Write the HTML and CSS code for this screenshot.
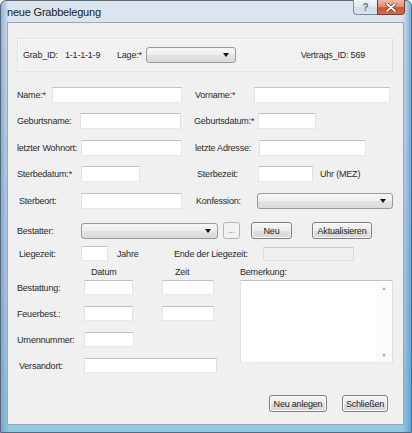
FILE: index.html
```html
<!DOCTYPE html>
<html lang="de">
<head>
<meta charset="utf-8">
<title>neue Grabbelegung</title>
<link rel="stylesheet" href="styles.css">
</head>
<body>
<div class="window">
  <div class="titlebar">
    <span class="title">neue Grabbelegung</span>
    <div class="caption-btns">
      <div class="cbtn help">?</div>
      <div class="cbtn close">
        <svg width="12" height="9" viewBox="0 0 12 9"><path d="M2 1 L10 8 M10 1 L2 8" stroke="#7a2a1a" stroke-width="3.2" stroke-linecap="round"/><path d="M2 1 L10 8 M10 1 L2 8" stroke="#fff" stroke-width="1.8" stroke-linecap="round"/></svg>
      </div>
    </div>
  </div>
  <div class="client">
    <div class="group">
      <span class="w42">Grab_ID:</span>
      <span class="w52">1-1-1-1-9</span>
      <span class="w29">Lage:*</span>
      <div class="combo w90"><span class="arrow"></span></div>
      <span class="vid">Vertrags_ID: 569</span>
    </div>

    <div class="row r1">
      <span class="lbl w35">Name:*</span>
      <div class="tb w130"></div>
      <span class="lbl w59 ml13">Vorname:*</span>
      <div class="tb w136"></div>
    </div>

    <div class="row r2">
      <span class="lbl w63">Geburtsname:</span>
      <div class="tb w101"></div>
      <span class="lbl w64 ml13">Geburtsdatum:*</span>
      <div class="tb w58"></div>
    </div>

    <div class="row r3">
      <span class="lbl w64">letzter Wohnort:</span>
      <div class="tb w101"></div>
      <span class="lbl w64 ml13">letzte Adresse:</span>
      <div class="tb w107"></div>
    </div>

    <div class="row r4">
      <span class="lbl w64">Sterbedatum:*</span>
      <div class="tb w59"></div>
      <span class="lbl w61 ml57">Sterbezeit:</span>
      <div class="tb w55"></div>
      <span class="lbl ml7">Uhr (MEZ)</span>
    </div>

    <div class="row r5">
      <span class="lbl w64 pl2">Sterbeort:</span>
      <div class="tb w101"></div>
      <span class="lbl w61 ml14">Konfession:</span>
      <div class="combo w136"><span class="arrow"></span></div>
    </div>

    <div class="row r6">
      <span class="lbl w64">Bestatter:</span>
      <div class="combo w137"><span class="arrow"></span></div>
      <div class="btn disabled w17 ml5">...</div>
      <div class="btn w41 ml11">Neu</div>
      <div class="btn w60 ml20">Aktualisieren</div>
    </div>

    <div class="row r7">
      <span class="lbl w64 pl2">Liegezeit:</span>
      <div class="tb w27 h15"></div>
      <span class="lbl w57 ml9">Jahre</span>
      <span class="lbl w89">Ende der Liegezeit:</span>
      <div class="tb disabledtb w91 h14"></div>
    </div>

    <div class="row hdr">
      <span class="w74"></span>
      <span class="w84">Datum</span>
      <span class="w65">Zeit</span>
      <span>Bemerkung:</span>
    </div>

    <div class="lower">
      <div class="leftcol">
        <div class="row lr">
          <span class="lbl w67">Bestattung:</span>
          <div class="tb w49 h15"></div>
          <div class="tb w52 h15 ml29"></div>
        </div>
        <div class="row lr m11">
          <span class="lbl w67">Feuerbest.:</span>
          <div class="tb w49 h15"></div>
          <div class="tb w52 h15 ml29"></div>
        </div>
        <div class="row lr m11">
          <span class="lbl w67">Urnennummer:</span>
          <div class="tb w50 h15"></div>
        </div>
        <div class="row lr m11">
          <span class="lbl w67 pl2">Versandort:</span>
          <div class="tb w133 h15"></div>
        </div>
      </div>
      <div class="memo">
        <div class="memo-text"></div>
        <div class="scroll">
          <span class="sarrow up"></span>
          <span class="sarrow down"></span>
        </div>
      </div>
    </div>

    <div class="actions">
      <div class="btn w58">Neu anlegen</div>
      <div class="btn w46">Schließen</div>
    </div>
  </div>
</div>
</body>
</html>
```

FILE: styles.css
```css
* { box-sizing: border-box; }
html, body { margin: 0; padding: 0; }
body {
  width: 412px;
  height: 433px;
  overflow: hidden;
  background: #ffffff;
  font-family: "Liberation Sans", Arial, sans-serif;
}

.window {
  width: 412px;
  height: 433px;
  display: flex;
  flex-direction: column;
  padding: 0 7px 7px 6px;
  border: 1px solid #56687c;
  border-radius: 6px 6px 0 0;
  background:
    linear-gradient(to right, rgba(100,145,195,0.6) 0, rgba(100,145,195,0) 8px, rgba(100,145,195,0) 401px, rgba(70,145,205,0.8) 412px),
    linear-gradient(to bottom, #dde6ef 0, #d3dfeb 60px, #b3cae0 300px, #93c8e0 100%);
}

.titlebar {
  height: 21px;
  display: flex;
  align-items: flex-start;
  justify-content: space-between;
}
.title {
  font-size: 11px;
  color: #1a1a1a;
  margin-top: 5px;
  letter-spacing: -0.2px;
}
.caption-btns {
  display: flex;
  margin-right: -1px;
  margin-top: -1px;
}
.cbtn {
  height: 15px;
  display: flex;
  align-items: center;
  justify-content: center;
  border: 1px solid #7c8c9e;
  border-top: none;
}
.help {
  width: 24px;
  border-radius: 0 0 0 4px;
  border-right: none;
  background: linear-gradient(#f0f4f8 0%, #e2e9f0 45%, #cfdbe6 55%, #dbe5ee 100%);
  color: #6a7580;
  font-size: 10px;
  font-weight: bold;
}
.close {
  width: 28px;
  border-radius: 0 0 4px 0;
  border-color: #7a3a2c;
  background: linear-gradient(#ecb8aa 0%, #df947c 45%, #cc5434 55%, #d56c48 100%);
}

.client {
  flex: 1;
  background: #f0f0f0;
  border: 1px solid #9aa8b6;
  padding-left: 9px;
  font-size: 9px;
  letter-spacing: -0.2px;
  color: #2a2a2a;
  display: flex;
  flex-direction: column;
}

.group {
  margin-top: 15px;
  width: 376px;
  height: 34px;
  border: 1px solid #e2e2e2;
  box-shadow: inset 1px 1px 0 #f8f8f8;
  background: #f1f1f1;
  display: flex;
  align-items: center;
  padding-left: 5px;
}
.vid { margin-left: auto; margin-right: 27px; }

.row {
  display: flex;
  align-items: center;
  flex: none;
}
.lbl { white-space: nowrap; flex: none; }
.r1 { margin-top: 15px; height: 16px; }
.r2 { margin-top: 10px; height: 16px; }
.r3 { margin-top: 11px; height: 16px; }
.r4 { margin-top: 10px; height: 16px; }
.r5 { margin-top: 11px; height: 16px; }
.r6 { margin-top: 13px; height: 17px; }
.r7 { margin-top: 7px; height: 15px; }
.hdr { margin-top: 6px; height: 10px; }
.lr { height: 15px; }
.m11 { margin-top: 11px; }

.tb {
  height: 16px;
  background: #ffffff;
  border: 1px solid;
  border-color: #bfc1c6 #e0e2e6 #e5e8ec #e0e2e6;
  flex: none;
}
.disabledtb {
  background: #f0f0f0;
  border-color: #c8cacd #dadbde #dedfe2 #dadbde;
}
.h15 { height: 15px; }
.h14 { height: 14px; }

.combo {
  position: relative;
  height: 16px;
  border: 1px solid #9a9a9a;
  border-radius: 3px;
  background: linear-gradient(#f6f6f6 0%, #eeeeee 50%, #e3e3e3 51%, #dadada 100%);
  flex: none;
}
.arrow {
  position: absolute;
  right: 6px;
  top: 5px;
  width: 0;
  height: 0;
  border-left: 3.5px solid transparent;
  border-right: 3.5px solid transparent;
  border-top: 4px solid #111;
}

.btn {
  height: 17px;
  border: 1px solid #7e7e7e;
  border-radius: 3px;
  background: linear-gradient(#f5f5f5 0%, #ededed 50%, #e0e0e0 51%, #d6d6d6 100%);
  box-shadow: inset 0 0 0 1px #fbfbfb;
  display: flex;
  align-items: center;
  justify-content: center;
  font-size: 9px;
  letter-spacing: -0.2px;
  color: #1a1a1a;
  flex: none;
  white-space: nowrap;
}
.btn.disabled {
  border-color: #b2b6b9;
  background: #f2f2f2;
  color: #8a8a8a;
  box-shadow: none;
  align-items: flex-end;
  padding-bottom: 3px;
}

.lower {
  margin-top: 3px;
  display: flex;
  align-items: flex-start;
}
.leftcol {
  width: 223px;
  display: flex;
  flex-direction: column;
}
.memo {
  width: 153px;
  height: 83px;
  background: #ffffff;
  border: 1px solid;
  border-color: #bfc1c6 #e0e2e6 #e5e8ec #e0e2e6;
  display: flex;
}
.memo-text { flex: 1; }
.scroll {
  width: 16px;
  display: flex;
  flex-direction: column;
  justify-content: space-between;
  align-items: center;
  padding: 6px 0 5px;
  background: #fbfbfb;
}
.sarrow {
  width: 0;
  height: 0;
  border-left: 2.5px solid transparent;
  border-right: 2.5px solid transparent;
}
.sarrow.up { border-bottom: 3px solid #b4b4b4; }
.sarrow.down { border-top: 3px solid #b4b4b4; }

.actions {
  margin-top: 22px;
  display: flex;
  justify-content: flex-end;
  gap: 15px;
  padding-right: 15px;
}

.w17 { width: 17px; } .w27 { width: 27px; } .w29 { width: 29px; }
.w35 { width: 35px; } .w41 { width: 41px; } .w42 { width: 42px; }
.w46 { width: 46px; } .w49 { width: 49px; } .w50 { width: 50px; }
.w52 { width: 52px; } .w55 { width: 55px; } .w57 { width: 57px; }
.w58 { width: 58px; } .w59 { width: 59px; } .w60 { width: 60px; }
.w61 { width: 61px; } .w63 { width: 63px; } .w64 { width: 64px; }
.w65 { width: 65px; } .w67 { width: 67px; } .w74 { width: 74px; }
.w84 { width: 84px; } .w89 { width: 89px; } .w90 { width: 90px; }
.w91 { width: 91px; } .w101 { width: 101px; } .w107 { width: 107px; }
.w130 { width: 130px; } .w133 { width: 133px; } .w136 { width: 136px; }
.w137 { width: 137px; }
.ml5 { margin-left: 5px; } .ml7 { margin-left: 7px; } .ml9 { margin-left: 9px; }
.ml11 { margin-left: 11px; } .ml13 { margin-left: 13px; } .ml14 { margin-left: 14px; }
.ml20 { margin-left: 20px; } .ml29 { margin-left: 29px; } .ml57 { margin-left: 57px; }
.pl2 { padding-left: 2px; }
```
